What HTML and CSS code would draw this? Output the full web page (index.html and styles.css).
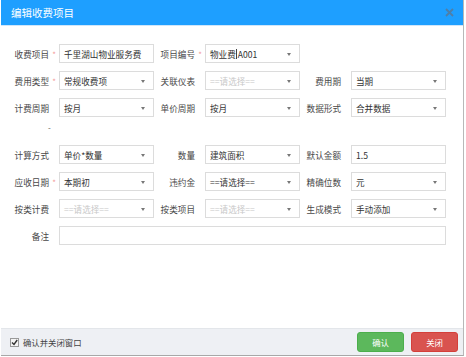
FILE: index.html
```html
<!DOCTYPE html>
<html lang="zh">
<head>
<meta charset="utf-8">
<link rel="stylesheet" href="styles.css">
</head>
<body>
<div class="dialog">
  <div class="dlg-head">
    <span class="dlg-title">编辑收费项目</span>
    <svg class="dlg-close" width="9" height="9" viewBox="0 0 9 9"><path d="M1 1L8 8M8 1L1 8" stroke="#4f7fa8" stroke-width="1.8"/></svg>
  </div>
  <div class="form">
    <div class="row">
      <div class="field"><label class="lbl">收费项目<i class="star">*</i></label><div class="inp">千里湖山物业服务费</div></div>
      <div class="field"><label class="lbl">项目编号<i class="star">*</i></label><div class="inp sel">物业费<span class="caret"></span>A001</div></div>
      <div class="field"></div>
    </div>
    <div class="row">
      <div class="field"><label class="lbl">费用类型<i class="star">*</i></label><div class="inp sel">常规收费项</div></div>
      <div class="field"><label class="lbl">关联仪表<i class="star"></i></label><div class="inp sel ph">==请选择==</div></div>
      <div class="field"><label class="lbl">费用期<i class="star"></i></label><div class="inp sel">当期</div></div>
    </div>
    <div class="row">
      <div class="field"><label class="lbl">计费周期<i class="star"></i></label><div class="inp sel">按月</div></div>
      <div class="field"><label class="lbl">单价周期<i class="star"></i></label><div class="inp sel">按月</div></div>
      <div class="field"><label class="lbl">数据形式<i class="star"></i></label><div class="inp sel">合并数据</div></div>
    </div>
    <div class="spacer"><span class="dash">-</span></div>
    <div class="row">
      <div class="field"><label class="lbl">计算方式<i class="star"></i></label><div class="inp sel">单价*数量</div></div>
      <div class="field"><label class="lbl">数量<i class="star"></i></label><div class="inp sel">建筑面积</div></div>
      <div class="field"><label class="lbl">默认金额<i class="star"></i></label><div class="inp">1.5</div></div>
    </div>
    <div class="row">
      <div class="field"><label class="lbl">应收日期<i class="star">*</i></label><div class="inp sel">本期初</div></div>
      <div class="field"><label class="lbl">违约金<i class="star"></i></label><div class="inp sel">==请选择==</div></div>
      <div class="field"><label class="lbl">精确位数<i class="star"></i></label><div class="inp sel">元</div></div>
    </div>
    <div class="row">
      <div class="field"><label class="lbl">按类计费<i class="star"></i></label><div class="inp sel ph">==请选择==</div></div>
      <div class="field"><label class="lbl">按类项目<i class="star"></i></label><div class="inp sel ph">==请选择==</div></div>
      <div class="field"><label class="lbl">生成模式<i class="star"></i></label><div class="inp sel">手动添加</div></div>
    </div>
    <div class="row wide">
      <div class="field"><label class="lbl">备注<i class="star"></i></label><div class="inp"></div></div>
    </div>
  </div>
  <div class="dlg-foot">
    <label class="chk"><span class="box"><svg width="7" height="7" viewBox="0 0 7 7"><path d="M1 3.5L3 5.5L6.2 1" stroke="#333" stroke-width="1.4" fill="none"/></svg></span>确认并关闭窗口</label>
    <div class="btns">
      <span class="btn ok">确认</span>
      <span class="btn close">关闭</span>
    </div>
  </div>
</div>
</body>
</html>
```

FILE: styles.css
```css
* { box-sizing: border-box; }
html, body { margin: 0; padding: 0; background: #fff; }
body {
  font-family: "Noto Sans CJK SC", "Liberation Sans", sans-serif;
  font-size: 8.6px;
  color: #333;
}
.dialog {
  width: 463px;
  height: 356px;
  margin-left: 1px;
  border-right: 1px solid #b8b8b8;
  border-bottom: 1px solid #a8a8a8;
  display: flex;
  flex-direction: column;
  background: #fff;
}
.dlg-head {
  height: 26px;
  background: #1e9fff;
  display: flex;
  align-items: center;
  justify-content: space-between;
  padding: 0 9px 0 10px;
  border-bottom: 1px solid #cfe6fa;
}
.dlg-title {
  color: #fff;
  font-size: 10.5px;
}
.dlg-close { display: block; }
.form {
  flex: 1;
  padding: 18px 0 0 7px;
  display: flex;
  flex-direction: column;
  gap: 8px;
}
.row {
  display: flex;
  height: 19px;
}
.field {
  width: 146px;
  display: flex;
  align-items: center;
}
.row.wide .field { width: 438px; }
.row.wide .inp { width: 387px; }
.lbl {
  width: 51px;
  display: flex;
  justify-content: flex-end;
  align-items: center;
  white-space: nowrap;
  color: #484848;
}
.star {
  width: 10px;
  font-style: normal;
  color: #f39a9a;
  font-size: 8px;
  text-align: center;
  line-height: 1;
  padding-top: 2px;
}
.inp {
  width: 95px;
  height: 19px;
  border: 1px solid #dcdcdc;
  padding: 0 4px;
  display: flex;
  align-items: center;
  white-space: nowrap;
  position: relative;
  color: #333;
}
.inp.ph { color: #c8c8c8; }
.inp.sel::after {
  content: "";
  position: absolute;
  right: 8px;
  top: 8px;
  border-left: 2.5px solid transparent;
  border-right: 2.5px solid transparent;
  border-top: 3px solid #777;
}
.caret {
  display: inline-block;
  width: 1px;
  height: 10px;
  background: #444;
  margin: 0 0.5px;
}
.spacer {
  height: 13px;
  margin-top: -1px;
}
.dash {
  display: block;
  margin-left: 40px;
  line-height: 8px;
  font-size: 8px;
  color: #555;
}
.dlg-foot {
  height: 27px;
  background: #eef0f4;
  border-top: 1px solid #e3e6ea;
  display: flex;
  align-items: center;
  justify-content: space-between;
  padding: 0 5px 0 9px;
}
.chk {
  display: flex;
  align-items: center;
  gap: 4px;
  font-size: 8.4px;
  color: #444;
}
.box {
  width: 9px;
  height: 9px;
  border: 1px solid #999;
  background: #f4f4f4;
  display: flex;
  align-items: center;
  justify-content: center;
}
.box svg { display: block; }
.btns { display: flex; gap: 7px; }
.btn {
  width: 47px;
  height: 20px;
  border-radius: 3px;
  color: #fff;
  display: flex;
  align-items: center;
  justify-content: center;
  font-size: 8.4px;
}
.btn.ok { background: #5cb85c; border: 1px solid #4cae4c; }
.btn.close { background: #d9534f; border: 1px solid #d43f3a; }
```
